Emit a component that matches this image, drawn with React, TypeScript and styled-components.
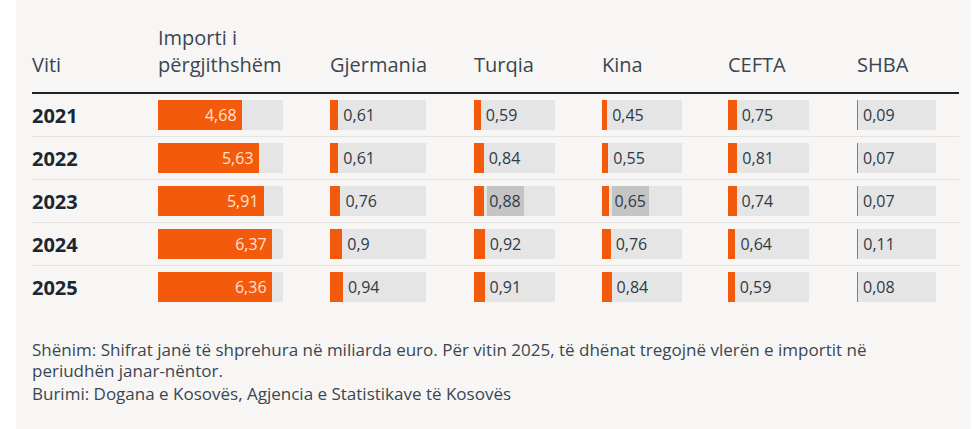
import styled, { createGlobalStyle } from "styled-components";

const GlobalStyle = createGlobalStyle`
  html, body {
    margin: 0;
    padding: 0;
    background: #ffffff;
  }
  body {
    font-family: "Open Sans", "Noto Sans", sans-serif;
    font-stretch: 93%;
  }
`;

const MAX = 7;

type Col = { name: string; track: number };

const columns: Col[] = [
  { name: "Importi i përgjithshëm", track: 125 },
  { name: "Gjermania", track: 96 },
  { name: "Turqia", track: 81 },
  { name: "Kina", track: 80 },
  { name: "CEFTA", track: 81 },
  { name: "SHBA", track: 79 },
];

const rows = [
  { year: "2021", values: [4.68, 0.61, 0.59, 0.45, 0.75, 0.09] },
  { year: "2022", values: [5.63, 0.61, 0.84, 0.55, 0.81, 0.07] },
  { year: "2023", values: [5.91, 0.76, 0.88, 0.65, 0.74, 0.07] },
  { year: "2024", values: [6.37, 0.9, 0.92, 0.76, 0.64, 0.11] },
  { year: "2025", values: [6.36, 0.94, 0.91, 0.84, 0.59, 0.08] },
];

// cells that are shown hovered in the screenshot
const highlighted = ["2023-2", "2023-3"];

const fmt = (v: number) => String(v).replace(".", ",");

const Card = styled.div`
  margin: 0 9px 0 16px;
  background: #f7f6f5;
  min-height: 429px;
  padding: 24px 12px 0 16px;
  box-sizing: border-box;
`;

const Grid = styled.div`
  display: grid;
  grid-template-columns: 126px 172px 144px 128px 126px 129px 1fr;
`;

const HeadRow = styled(Grid)`
  align-items: end;
  padding-bottom: 14px;
  border-bottom: 2px solid #1f2326;
`;

const HeadCell = styled.div`
  font-size: 20px;
  line-height: 27px;
  color: #3a4651;
  padding-right: 24px;
`;

const Row = styled(Grid)<{ $last?: boolean }>`
  align-items: center;
  padding: 6px 0;
  border-bottom: 1px solid ${(p) => (p.$last ? "transparent" : "#e4e3e1")};
`;

const Year = styled.div`
  font-size: 20px;
  font-weight: 700;
  color: #1b2731;
`;

const Track = styled.div<{ $w: number }>`
  width: ${(p) => p.$w}px;
  height: 30px;
  background: #e5e5e5;
  display: flex;
  align-items: stretch;
`;

const Fill = styled.div<{ $inside?: boolean }>`
  background: #f45a0c;
  flex: none;
  display: flex;
  align-items: center;
  justify-content: flex-end;
  box-sizing: border-box;
  padding-right: ${(p) => (p.$inside ? "5px" : "0")};
  min-width: 1px;
`;

const InsideValue = styled.span`
  font-size: 16px;
  color: #fde3d2;
`;

const Value = styled.span<{ $hover?: boolean }>`
  margin-left: 3px;
  padding: 0 3px 0 2px;
  display: flex;
  align-items: center;
  font-size: 16px;
  color: #2e3a45;
  background: ${(p) => (p.$hover ? "#c4c4c4" : "transparent")};
`;

const Notes = styled.div`
  padding-top: 30px;
  max-width: 880px;
  font-size: 17px;
  line-height: 21px;
  color: #3a4651;
`;

const Note = styled.p`
  margin: 0 0 2px;
`;

const Bar = ({ value, track, inside, hover }: { value: number; track: number; inside?: boolean; hover?: boolean }) => {
  const w = Math.max(1, (value / MAX) * track);
  return (
    <Track $w={track}>
      <Fill $inside={inside} style={{ width: `${w}px` }}>
        {inside && <InsideValue>{fmt(value)}</InsideValue>}
      </Fill>
      {!inside && <Value $hover={hover}>{fmt(value)}</Value>}
    </Track>
  );
};

const App = () => {
  return (
    <>
      <GlobalStyle />
      <Card>
        <HeadRow>
          <HeadCell>Viti</HeadCell>
          {columns.map((c) => (
            <HeadCell key={c.name}>{c.name}</HeadCell>
          ))}
        </HeadRow>
        {rows.map((r, i) => (
          <Row key={r.year} $last={i === rows.length - 1}>
            <Year>{r.year}</Year>
            {r.values.map((v, j) => (
              <Bar
                key={j}
                value={v}
                track={columns[j].track}
                inside={j === 0}
                hover={highlighted.includes(`${r.year}-${j}`)}
              />
            ))}
          </Row>
        ))}
        <Notes>
          <Note>
            Shënim: Shifrat janë të shprehura në miliarda euro. Për vitin 2025, të dhënat tregojnë vlerën e importit
            në periudhën janar-nëntor.
          </Note>
          <Note>Burimi: Dogana e Kosovës, Agjencia e Statistikave të Kosovës</Note>
        </Notes>
      </Card>
    </>
  );
};

export default App;
